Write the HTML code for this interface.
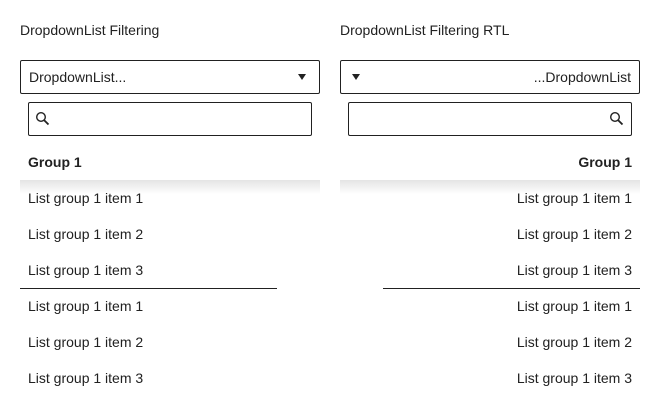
<!DOCTYPE html>
<html><head><style>
body{margin:0;width:660px;height:416px;background:#fff;font-family:"Liberation Sans",Arial,sans-serif;font-size:14px;color:#212121;position:relative;overflow:hidden}
.a{position:absolute}
.t{position:absolute;line-height:16px;white-space:nowrap}
.box{position:absolute;border:1px solid #212121;border-radius:2px;box-sizing:border-box}
.sh{position:absolute;height:14px;background:linear-gradient(#e4e4e4,rgba(255,255,255,0))}
.tri{position:absolute;width:0;height:0;border-left:4.5px solid transparent;border-right:4.5px solid transparent;border-top:6px solid #212121}
</style></head><body>
<div class="t" style="left:20px;top:22px">DropdownList Filtering</div>
<div class="t" style="left:340px;top:22px">DropdownList Filtering RTL</div>

<div class="box" style="left:20px;top:60px;width:300px;height:34px"></div>
<div class="t" style="left:29px;top:69px">DropdownList...</div>
<div class="tri" style="left:298px;top:74px"></div>
<div class="box" style="left:28px;top:102px;width:284px;height:34px"></div>
<svg class="a" style="left:35px;top:111px" width="16" height="16" viewBox="0 0 16 16"><circle cx="6" cy="6" r="4.3" fill="none" stroke="#212121" stroke-width="1.4"/><path d="M9.2 9.2L13.5 13.5" stroke="#212121" stroke-width="1.8"/></svg>
<div class="t" style="left:28px;top:154px;font-weight:bold">Group 1</div>
<div class="sh" style="left:20px;top:180px;width:300px"></div>
<div class="t" style="left:28px;top:190px">List group 1 item 1</div>
<div class="t" style="left:28px;top:226px">List group 1 item 2</div>
<div class="t" style="left:28px;top:262px">List group 1 item 3</div>
<div class="a" style="left:20px;top:288px;width:257px;height:1px;background:#212121"></div>
<div class="t" style="left:28px;top:298px">List group 1 item 1</div>
<div class="t" style="left:28px;top:334px">List group 1 item 2</div>
<div class="t" style="left:28px;top:370px">List group 1 item 3</div>

<div class="box" style="left:340px;top:60px;width:300px;height:34px"></div>
<div class="t" style="right:29px;top:69px">...DropdownList</div>
<div class="tri" style="left:352px;top:74px"></div>
<div class="box" style="left:348px;top:102px;width:284px;height:34px"></div>
<svg class="a" style="left:609px;top:111px" width="16" height="16" viewBox="0 0 16 16"><circle cx="6" cy="6" r="4.3" fill="none" stroke="#212121" stroke-width="1.4"/><path d="M9.2 9.2L13.5 13.5" stroke="#212121" stroke-width="1.8"/></svg>
<div class="t" style="right:28px;top:154px;font-weight:bold">Group 1</div>
<div class="sh" style="left:340px;top:180px;width:300px"></div>
<div class="t" style="right:28px;top:190px">List group 1 item 1</div>
<div class="t" style="right:28px;top:226px">List group 1 item 2</div>
<div class="t" style="right:28px;top:262px">List group 1 item 3</div>
<div class="a" style="left:383px;top:288px;width:257px;height:1px;background:#212121"></div>
<div class="t" style="right:28px;top:298px">List group 1 item 1</div>
<div class="t" style="right:28px;top:334px">List group 1 item 2</div>
<div class="t" style="right:28px;top:370px">List group 1 item 3</div>
</body></html>
